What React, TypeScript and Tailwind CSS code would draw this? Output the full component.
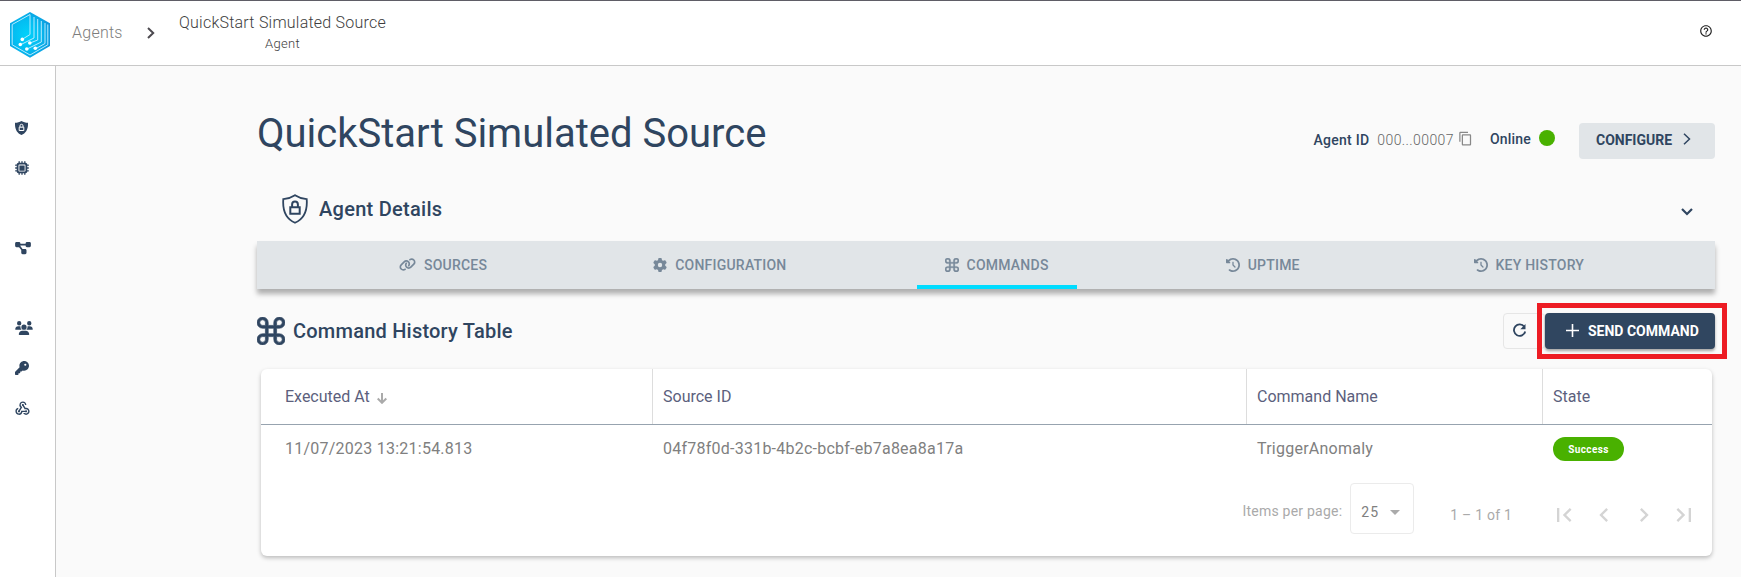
import React from 'react';
import {
  FaMicrochip,
  FaDiagramProject,
  FaUsers,
  FaKey,
  FaLink,
  FaGear,
  FaClockRotateLeft,
} from 'react-icons/fa6';
import {
  MdWebhook,
  MdArrowDropDown,
  MdFirstPage,
  MdLastPage,
  MdChevronLeft,
  MdChevronRight,
  MdHelpOutline,
  MdContentCopy,
} from 'react-icons/md';

function Logo() {
  return (
    <svg width="42" height="48" viewBox="0 0 42 48">
      <defs>
        <radialGradient id="hex" cx="0.42" cy="0.5" r="0.6">
          <stop offset="0" stopColor="#00d2fb" />
          <stop offset="0.55" stopColor="#04bdf1" />
          <stop offset="1" stopColor="#0e97dc" />
        </radialGradient>
      </defs>
      <path d="M21 1 41 12.2V35L21 46.8 1 35V12.2Z" fill="url(#hex)" />
      <g fill="none" stroke="#b4ebff" strokeWidth="1">
        <path d="M21 3.5 3.2 13.5V33.8L21 44 38.8 33.8V13.5" />
        <path d="M21 3.5V23.5L13 28.5" />
        <path d="M25 6V27L12 33.5" />
        <path d="M28.7 8V29L21 32" />
        <path d="M32.3 10V31L18 38" />
        <path d="M36 12V32.5L27 37.5" />
      </g>
      <g fill="#fff">
        <circle cx="13.3" cy="28.4" r="1.8" />
        <circle cx="11.3" cy="33.5" r="1.8" />
        <circle cx="20.8" cy="32" r="1.8" />
        <circle cx="17.8" cy="38" r="1.8" />
        <circle cx="26.3" cy="37.2" r="1.8" />
      </g>
    </svg>
  );
}

function ShieldLock() {
  return (
    <svg width="26" height="30" viewBox="0 0 26 30" fill="none" stroke="#2f4560" strokeWidth="1.8">
      <path d="M13 1.2C16.5 3.5 20.5 4.8 24.7 5.1 25.6 16.5 21.5 25 13 28.8 4.5 25 .4 16.5 1.3 5.1 5.5 4.8 9.5 3.5 13 1.2Z" />
      <path d="M8.3 13.2H17.7V19.8H8.3ZM10.1 13V10.5a2.9 2.9 0 0 1 5.8 0V13" strokeWidth="2" />
    </svg>
  );
}

function ShieldLockSolid() {
  return (
    <svg width="13" height="14" viewBox="0 0 13 14">
      <path d="M6.5 0C8.5 1.2 10.5 1.8 13 1.8 13.3 7.5 11.3 12 6.5 14 1.7 12 -.3 7.5 0 1.8 2.5 1.8 4.5 1.2 6.5 0Z" fill="#2f4560" />
      <path d="M4.2 6.2H8.8V9.5H4.2ZM5 6V4.8a1.5 1.5 0 0 1 3 0V6" fill="none" stroke="#fff" />
    </svg>
  );
}

function Command({ size }: { size: number }) {
  return (
    <svg width={size} height={size} viewBox="2 2 20 20" fill="currentColor">
      <path
        d="M6,2A4,4 0 0,1 10,6V8H14V6A4,4 0 0,1 18,2A4,4 0 0,1 22,6A4,4 0 0,1 18,10H16V14H18A4,4 0 0,1 22,18A4,4 0 0,1 18,22A4,4 0 0,1 14,18V16H10V18A4,4 0 0,1 6,22A4,4 0 0,1 2,18A4,4 0 0,1 6,14H8V10H6A4,4 0 0,1 2,6A4,4 0 0,1 6,2M16,18A2,2 0 0,0 18,20A2,2 0 0,0 20,18A2,2 0 0,0 18,16H16V18M14,10H10V14H14V10M6,16A2,2 0 0,0 4,18A2,2 0 0,0 6,20A2,2 0 0,0 8,18V16H6M8,6A2,2 0 0,0 6,4A2,2 0 0,0 4,6A2,2 0 0,0 6,8H8V6M18,8A2,2 0 0,0 20,6A2,2 0 0,0 18,4A2,2 0 0,0 16,6V8H18Z"
        stroke="currentColor"
        strokeWidth="0.5"
      />
    </svg>
  );
}

function Sidebar() {
  return (
    <nav className="flex w-14 shrink-0 flex-col border-r border-[#c8c8c8] bg-white pt-[42px] pl-[15px] text-[#2f4560]">
      <div className="flex h-10 items-center"><ShieldLockSolid /></div>
      <div className="flex h-10 items-center"><FaMicrochip size={14} /></div>
      <div className="h-10" />
      <div className="flex h-10 items-center"><FaDiagramProject className="h-[14px] w-4" /></div>
      <div className="h-10" />
      <div className="flex h-10 items-center"><FaUsers className="h-[14px] w-[18px]" /></div>
      <div className="flex h-10 items-center"><FaKey size={14} /></div>
      <div className="flex h-10 items-center"><MdWebhook className="-ml-px" size={17} /></div>
    </nav>
  );
}

function Tab({ icon, label, active }: { icon: React.ReactNode; label: string; active?: boolean }) {
  return (
    <div
      className={
        'flex h-12 min-w-[160px] items-center justify-center gap-2 border-b-4 px-6 pt-[3px] text-sm font-medium tracking-[0.22px] ' +
        (active ? 'border-[#00dcff]' : 'border-transparent')
      }
    >
      {icon}
      <span>{label}</span>
    </div>
  );
}

export default function App() {
  return (
    <div className="flex h-[577px] w-[1741px] flex-col overflow-hidden bg-[#fafafa] font-[Roboto,sans-serif]">
      <header className="flex h-[66px] shrink-0 items-center border-t border-b border-t-[#5f5d66] border-b-[#c8c8c8] bg-white">
        <div className="ml-[9px] pt-1"><Logo /></div>
        <div className="ml-[21px] w-[75px] text-base font-light tracking-[0.25px] text-[#7d7d7d]">Agents</div>
        <svg width="8" height="12" viewBox="0 0 8 12" fill="none" stroke="#4d4a50" strokeWidth="2">
          <path d="M1 1 6.2 6 1 11" />
        </svg>
        <div className="ml-6 flex flex-col items-center pb-px font-light text-[#3d3d3d]">
          <span className="text-base leading-[22px] tracking-[0.23px]">QuickStart Simulated Source</span>
          <span className="text-[13px] leading-5 tracking-[0.3px]">Agent</span>
        </div>
        <MdHelpOutline className="mr-[28px] mb-1 ml-auto text-[#222]" size={14} />
      </header>

      <div className="flex flex-1">
        <Sidebar />
        <main className="flex flex-1 flex-col pr-[26px] pl-[201px] text-[#2f4560]">
          <div className="flex h-[120px] items-center">
            <h1 className="pt-4 text-[40px] leading-none">QuickStart Simulated Source</h1>
            <div className="ml-auto flex items-center pt-[30px] text-sm">
              <span className="pb-0.5 font-medium tracking-[0.25px]">Agent ID</span>
              <span className="ml-2 pb-0.5 font-light tracking-[0.4px] text-[#666]">000...00007</span>
              <MdContentCopy className="mb-1.5 ml-1 text-[#888]" size={15} />
              <span className="ml-[17px] pb-1 font-medium tracking-[0.2px]">Online</span>
              <span className="mb-1.5 ml-2 size-4 rounded-full bg-[#49b100]" />
              <button className="ml-6 flex h-9 w-[136px] items-center rounded bg-[#e1e5e8] pb-0.5 pl-[17px] font-bold">
                CONFIGURE
                <svg className="mb-0.5 ml-[11px]" width="8" height="12" viewBox="0 0 8 12" fill="none" stroke="currentColor" strokeWidth="1.5">
                  <path d="M1 .7 6.5 6 1 11.3" />
                </svg>
              </button>
            </div>
          </div>

          <div className="flex h-[55px] items-center pb-[9px] pl-[25px]">
            <ShieldLock />
            <h2 className="ml-[11px] text-xl font-medium tracking-[0.28px]">Agent Details</h2>
            <svg className="mt-1.5 mr-[22px] ml-auto" width="12" height="8" viewBox="0 0 12 8" fill="none" stroke="currentColor" strokeWidth="2.2">
              <path d="M1 1 6 6 11 1" />
            </svg>
          </div>

          <div className="flex h-12 shrink-0 justify-evenly bg-[#e1e5e8] text-[#778899] shadow-[0_5px_5px_rgba(0,0,0,0.3)]">
            <Tab icon={<FaLink className="h-[15px] w-[17px]" />} label="SOURCES" />
            <Tab icon={<FaGear size={14} />} label="CONFIGURATION" />
            <Tab icon={<Command size={14} />} label="COMMANDS" active />
            <Tab icon={<FaClockRotateLeft size={14} />} label="UPTIME" />
            <Tab icon={<FaClockRotateLeft size={14} />} label="KEY HISTORY" />
          </div>

          <div className="relative flex h-20 shrink-0 items-center pt-1">
            <Command size={28} />
            <h2 className="ml-2 text-xl font-medium tracking-[0.22px]">Command History Table</h2>
            <button className="ml-auto flex h-9 w-[42px] items-center rounded border border-[#e6e6e6] pb-0.5 pl-2">
              <svg width="15" height="15" viewBox="0 0 15 15" fill="none" stroke="currentColor" strokeWidth="1.8">
                <path d="M12.3 3.8A5.7 5.7 0 1 0 13.2 8.5" />
                <path d="M13.5 1V6.2H8.3Z" fill="currentColor" stroke="none" />
              </svg>
            </button>
            <button className="flex h-9 w-[170px] items-center rounded bg-[#304660] pb-px pl-[21px] text-sm font-bold text-white shadow-[0_2px_3px_rgba(0,0,0,0.35)]">
              <svg className="mb-px" width="13" height="13" viewBox="0 0 13 13" stroke="currentColor" strokeWidth="1.6">
                <path d="M6.5 0V13M0 6.5H13" />
              </svg>
              <span className="ml-[9px]">SEND COMMAND</span>
            </button>
            <div className="absolute top-[14px] -right-3 h-14 w-[190px] border-[5px] border-[#ed1c24]" />
          </div>

          <section className="mr-[3px] ml-1 flex h-[187px] shrink-0 flex-col rounded-md bg-white text-base shadow-[0_2px_4px_rgba(0,0,0,0.25)]">
            <div className="flex h-14 border-b border-[#97a3af] text-[#5c5f7d]">
              <div className="flex w-[392px] items-center border-r border-[#ddd] pl-6">
                Executed At
                <svg className="mt-1 ml-[7px]" width="10" height="11" viewBox="0 0 10 11" fill="none" stroke="#aaa" strokeWidth="2">
                  <path d="M5 0V10M.7 5.5 5 9.8 9.3 5.5" />
                </svg>
              </div>
              <div className="flex w-[594px] items-center border-r border-[#ddd] pl-[10px]">Source ID</div>
              <div className="flex w-[296px] items-center border-r border-[#ddd] pl-[10px]">Command Name</div>
              <div className="flex flex-1 items-center pl-[10px]">State</div>
            </div>
            <div className="flex h-12 items-center tracking-[0.24px] text-[#808080]">
              <div className="w-[392px] pl-6">11/07/2023 13:21:54.813</div>
              <div className="w-[594px] pl-[10px]">04f78f0d-331b-4b2c-bcbf-eb7a8ea8a17a</div>
              <div className="w-[296px] pl-[10px]">TriggerAnomaly</div>
              <div className="pl-[10px]">
                <div className="flex h-6 w-[71px] items-center justify-center rounded-full bg-[#49b100] text-[10px] font-bold tracking-[0.4px] text-white">
                  Success
                </div>
              </div>
            </div>
            <div className="flex h-[72px] items-center justify-end pr-2 text-sm tracking-[0.22px] text-[#aaa]">
              <span className="pt-1">Items per page:</span>
              <div className="mb-px ml-2 flex h-[51px] w-16 items-center rounded border border-[#ebebeb] pt-1.5 pl-[10px] tracking-[1px] text-[#808080]">
                25
                <MdArrowDropDown className="ml-1 text-[#aaa]" size={24} />
              </div>
              <span className="mt-[11px] ml-9">1 – 1 of 1</span>
              <div className="mt-3 ml-8 flex text-[#d4d4d4]">
                <div className="flex size-10 items-center justify-center"><MdFirstPage size={28} /></div>
                <div className="flex size-10 items-center justify-center"><MdChevronLeft size={28} /></div>
                <div className="flex size-10 items-center justify-center"><MdChevronRight size={28} /></div>
                <div className="flex size-10 items-center justify-center"><MdLastPage size={28} /></div>
              </div>
            </div>
          </section>
        </main>
      </div>
    </div>
  );
}
